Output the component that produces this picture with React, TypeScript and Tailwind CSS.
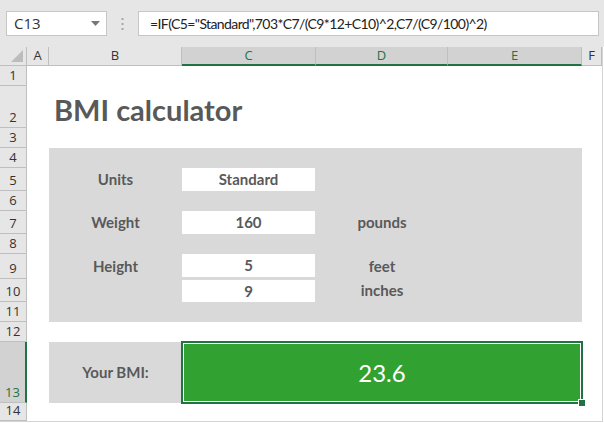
import React from "react";

const formula = '=IF(C5="Standard",703*C7/(C9*12+C10)^2,C7/(C9/100)^2)';

const colHeaders = [
  { label: "A", cls: "col-start-2", sel: false },
  { label: "B", cls: "col-start-3", sel: false },
  { label: "C", cls: "col-start-4", sel: true },
  { label: "D", cls: "col-start-5", sel: true },
  { label: "E", cls: "col-start-6", sel: true },
  { label: "F", cls: "col-start-7", sel: false },
];

const rowHeaders = [
  { n: 1, cls: "row-start-2" },
  { n: 2, cls: "row-start-3" },
  { n: 3, cls: "row-start-4" },
  { n: 4, cls: "row-start-5" },
  { n: 5, cls: "row-start-6" },
  { n: 6, cls: "row-start-7" },
  { n: 7, cls: "row-start-8" },
  { n: 8, cls: "row-start-9" },
  { n: 9, cls: "row-start-10" },
  { n: 10, cls: "row-start-11" },
  { n: 11, cls: "row-start-12" },
  { n: 12, cls: "row-start-13" },
  { n: 13, cls: "row-start-14" },
  { n: 14, cls: "row-start-15" },
];

const label = "flex items-center justify-center text-[15px] font-bold text-[#595959]";
const input = "bg-white mr-[1px] flex items-center justify-center text-[15px] font-bold text-[#595959]";

export default function App() {
  return (
    <div className="w-[604px] h-[423px] bg-white overflow-hidden flex flex-col font-['Lato',sans-serif]">
      {/* formula bar */}
      <div className="h-[47px] shrink-0 bg-[#e6e6e6] flex items-start pt-[11px] pl-[6px] pr-[5px]">
        <div className="w-[101px] h-[25px] bg-white border border-[#c6c6c6] flex items-center justify-between pl-[7px] pr-[6px]">
          <span className="text-[15px] text-[#333] font-['Open_Sans',sans-serif] leading-none">C13</span>
          <svg width="9" height="5" viewBox="0 0 9 5">
            <path d="M0 0 L9 0 L4.5 5 Z" fill="#777" />
          </svg>
        </div>
        <div className="w-[31px] h-[25px] flex items-center justify-center">
          <svg width="3" height="12" viewBox="0 0 3 12">
            <rect x="0.5" y="0" width="2" height="2" fill="#a6a6a6" />
            <rect x="0.5" y="5" width="2" height="2" fill="#a6a6a6" />
            <rect x="0.5" y="10" width="2" height="2" fill="#a6a6a6" />
          </svg>
        </div>
        <div className="flex-1 h-[25px] bg-white border border-[#c6c6c6] flex items-center pl-[11px]">
          <span className="text-[14px] tracking-[-0.6px] text-[#222] whitespace-nowrap leading-none">{formula}</span>
        </div>
      </div>

      {/* sheet */}
      <div className="w-[603px] border-r border-b border-[#d4d4d4] grid grid-cols-[27px_22px_133px_134px_132px_134px_20px] grid-rows-[19px_20px_42px_20px_20px_23px_20px_23px_20px_25px_23px_20px_20px_61px_18px]">
        {/* corner */}
        <div className="col-start-1 row-start-1 bg-[#e6e6e6] border-r border-b border-[#bfbfbf] flex items-end justify-end pr-[3px] pb-[3px]">
          <svg width="12" height="12" viewBox="0 0 12 12">
            <path d="M12 0 L12 12 L0 12 Z" fill="#bcbcbc" />
          </svg>
        </div>

        {colHeaders.map((c) => (
          <div
            key={c.label}
            className={`${c.cls} row-start-1 flex items-center justify-center text-[13px] font-['Open_Sans',sans-serif] ${
              c.sel
                ? "bg-[#d2d2d2] text-[#217346] border-r border-[#bfbfbf] border-b-2 border-b-[#217346]"
                : "bg-[#e6e6e6] text-[#333] border-r border-b border-[#bfbfbf]"
            }`}
          >
            {c.label}
          </div>
        ))}

        {rowHeaders.map((r) => (
          <div
            key={r.n}
            className={`${r.cls} col-start-1 flex items-end justify-center pb-[1px] text-[13px] font-['Open_Sans',sans-serif] leading-[17px] ${
              r.n === 13
                ? "bg-[#d2d2d2] text-[#217346] border-b border-[#bfbfbf] border-r-2 border-r-[#217346]"
                : "bg-[#e6e6e6] text-[#333] border-r border-b border-[#bfbfbf]"
            }`}
          >
            {r.n}
          </div>
        ))}

        {/* title */}
        <div className="col-start-3 col-span-4 row-start-3 flex items-end pl-[5px] pb-[4px]">
          <span className="text-[29px] font-bold text-[#595959] leading-none">BMI calculator</span>
        </div>

        {/* input panel */}
        <div className="col-start-3 col-span-4 row-start-5 row-span-8 bg-[#d9d9d9]" />

        <div className={`col-start-3 row-start-6 ${label}`}>Units</div>
        <div className={`col-start-4 row-start-6 ${input}`}>Standard</div>

        <div className={`col-start-3 row-start-8 ${label}`}>Weight</div>
        <div className={`col-start-4 row-start-8 ${input}`}>160</div>
        <div className={`col-start-5 row-start-8 ${label}`}>pounds</div>

        <div className={`col-start-3 row-start-10 ${label}`}>Height</div>
        <div className={`col-start-4 row-start-10 mb-[2px] ${input}`}>5</div>
        <div className={`col-start-5 row-start-10 ${label}`}>feet</div>

        <div className={`col-start-4 row-start-11 mt-[1px] ${input}`}>9</div>
        <div className={`col-start-5 row-start-11 ${label}`}>inches</div>

        {/* result */}
        <div className={`col-start-3 row-start-14 bg-[#d9d9d9] ${label}`}>Your BMI:</div>
        <div className="col-start-4 col-span-3 row-start-14 relative bg-[#31a232] flex items-center justify-center">
          <span className="text-[24px] text-white leading-none">23.6</span>
          <div className="absolute -left-[1px] -top-[1px] -right-[1px] -bottom-[1px] border-2 border-[#217346] pointer-events-none">
            <div className="w-full h-full border border-white" />
          </div>
          <div className="absolute -right-[3px] -bottom-[3px] w-[7px] h-[7px] bg-[#217346] border-l border-t border-white" />
        </div>
      </div>
    </div>
  );
}
